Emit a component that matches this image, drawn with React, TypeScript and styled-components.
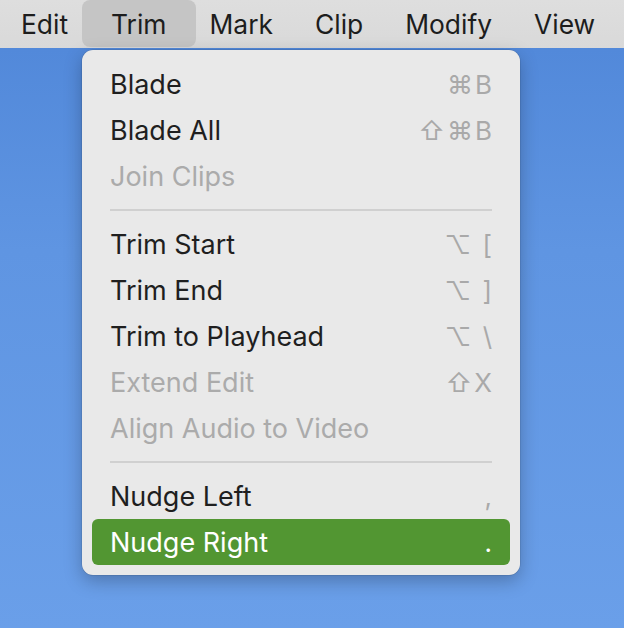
import React from "react";
import styled, { createGlobalStyle } from "styled-components";

const Global = createGlobalStyle`
  html, body { margin: 0; padding: 0; }
  body {
    width: 624px;
    height: 628px;
    overflow: hidden;
    font-family: Inter, "Noto Sans", "Liberation Sans", sans-serif;
    -webkit-font-smoothing: antialiased;
  }
`;

const Desktop = styled.div`
  width: 624px;
  height: 628px;
  background: linear-gradient(180deg, #4f86d8 0%, #5f95e2 40%, #6a9fe9 100%);
  display: flex;
  flex-direction: column;
`;

const MenuBar = styled.div`
  height: 48px;
  background: linear-gradient(180deg, #dedede 0%, #d9d9d9 100%);
  display: flex;
  align-items: flex-start;
  padding-left: 0px;
  box-sizing: border-box;
`;

const BarItem = styled.div<{ $active?: boolean }>`
  display: flex;
  align-items: center;
  padding: 0 ${(p) => (p.$active ? 29.5 : 21)}px;
  margin: 0 ${(p) => (p.$active ? -7.5 : 0)}px;
  font-size: 26.4px;
  color: #1d1d1d;
  border-radius: 8px;
  height: 47px;
  background: ${(p) => (p.$active ? "#c5c5c5" : "transparent")};
`;

const MenuArea = styled.div`
  padding-left: 82px;
  padding-top: 2px;
`;

const Menu = styled.div`
  width: 438px;
  box-sizing: border-box;
  background: #e9e9e9;
  border-radius: 11px;
  padding: 11px 10px 10px;
  box-shadow: 0 6px 18px rgba(0, 0, 0, 0.25), 0 0 0 0.5px rgba(0, 0, 0, 0.15);
  display: flex;
  flex-direction: column;
`;

const Row = styled.div<{ $disabled?: boolean; $selected?: boolean }>`
  height: 46px;
  display: flex;
  align-items: center;
  justify-content: space-between;
  padding: 0 18px 0 18px;
  border-radius: 6px;
  font-size: 27px;
  color: ${(p) => (p.$selected ? "#ffffff" : p.$disabled ? "#ababab" : "#1f1f1f")};
  background: ${(p) => (p.$selected ? "#529632" : "transparent")};
`;

const Shortcut = styled.span<{ $selected?: boolean }>`
  color: ${(p) => (p.$selected ? "#ffffff" : "#a9a9a9")};
  font-size: 26px;
  letter-spacing: 2px;
  margin-right: -2px;
`;

const Separator = styled.div`
  height: 2px;
  margin: 10px 18px 10px 18px;
  background: #d0d0d0;
`;

type Item = { label: string; key?: string; disabled?: boolean; selected?: boolean } | "sep";

const items: Item[] = [
  { label: "Blade", key: "⌘B" },
  { label: "Blade All", key: "⇧⌘B" },
  { label: "Join Clips", disabled: true },
  "sep",
  { label: "Trim Start", key: "⌥ [" },
  { label: "Trim End", key: "⌥ ]" },
  { label: "Trim to Playhead", key: "⌥ \\" },
  { label: "Extend Edit", key: "⇧X", disabled: true },
  { label: "Align Audio to Video", disabled: true },
  "sep",
  { label: "Nudge Left", key: "," },
  { label: "Nudge Right", key: ".", selected: true },
];

export default function App() {
  return (
    <Desktop>
      <Global />
      <MenuBar>
        {["Edit", "Trim", "Mark", "Clip", "Modify", "View"].map((m) => (
          <BarItem key={m} $active={m === "Trim"}>
            {m}
          </BarItem>
        ))}
      </MenuBar>
      <MenuArea>
        <Menu>
          {items.map((it, i) =>
            it === "sep" ? (
              <Separator key={i} />
            ) : (
              <Row key={i} $disabled={it.disabled} $selected={it.selected}>
                <span>{it.label}</span>
                {it.key && <Shortcut $selected={it.selected}>{it.key}</Shortcut>}
              </Row>
            )
          )}
        </Menu>
      </MenuArea>
    </Desktop>
  );
}
